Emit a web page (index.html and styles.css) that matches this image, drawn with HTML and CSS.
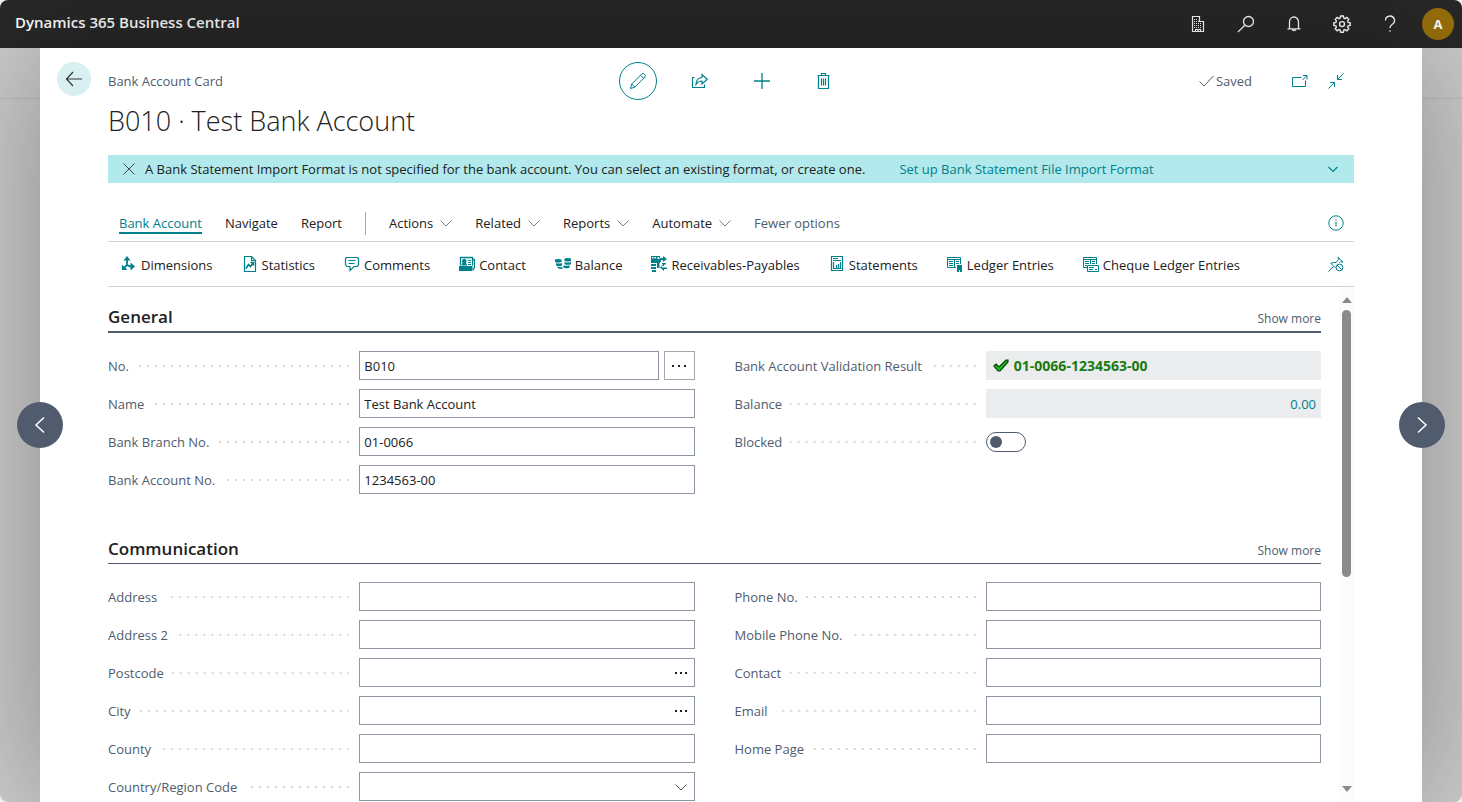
FILE: index.html
```html
<!DOCTYPE html>
<html lang="en">
<head>
<meta charset="utf-8">
<title>Bank Account Card - Dynamics 365 Business Central</title>
<link rel="stylesheet" href="styles.css">
</head>
<body>
<svg class="sprite" aria-hidden="true">
  <symbol id="chevron" viewBox="0 0 12 12"><path d="M.5 3.500 6 9l5.500-5.500" fill="none" stroke="currentColor"/></symbol>
  <symbol id="dots" viewBox="0 0 16 16"><path d="M1 7h2v2H1zM7 7h2v2H7zM13 7h2v2h-2z" fill="currentColor"/></symbol>
</svg>

<div class="app">
  <header class="topbar">
    <div class="brand">Dynamics 365 Business Central</div>
    <nav class="topbar-tools" aria-label="Application">
      <button type="button" class="tool" aria-label="Company">
        <svg width="16" height="16" viewBox="0 0 16 16" fill="none" stroke="currentColor"><path d="M2.500 15.500V.5h7v5h4v10zM5.500 15.500v-2h5v2M8 13.500v2" stroke-width="1.200"/><path d="M4 3.500h1m1 0h1M4 5.500h1m1 0h1m1 0h1M4 7.500h1m1 0h1m1 0h1m1 0h1M4 9.500h1m1 0h1m1 0h1m1 0h1M4 11.500h1m1 0h1m1 0h1m1 0h1"/></svg>
      </button>
      <button type="button" class="tool" aria-label="Search">
        <svg width="18" height="18" viewBox="0 0 18 18" fill="none" stroke="currentColor" stroke-width="1.300"><circle cx="11.500" cy="6.500" r="5"/><path d="M7.800 10.200 1 17"/></svg>
      </button>
      <button type="button" class="tool" aria-label="Notifications">
        <svg width="16" height="16" viewBox="0 0 16 16" fill="none" stroke="currentColor" stroke-width="1.300"><path d="M1.500 12.800h13M3.500 12.500V6a4.500 5 0 0 1 9 0v6.500M6.300 13a1.700 1.700 0 0 0 3.400 0"/></svg>
      </button>
      <button type="button" class="tool" aria-label="Settings">
        <svg width="18" height="18" viewBox="0 0 18 18" fill="none" stroke="currentColor" stroke-width="1.400"><path d="M7.600 1h2.800l.4 2.100 1.200.5 1.800-1.200 2 2-1.200 1.800.5 1.200 2.100.4v2.600l-2.100.4-.5 1.200 1.200 1.800-2 2-1.800-1.200-1.200.5-.4 2.100H7.600l-.4-2.100-1.200-.5-1.800 1.200-2-2L3.400 12l-.5-1.200L.8 10.400V7.800l2.100-.4.5-1.200-1.200-1.800 2-2L6 3.600l1.200-.5z"/><circle cx="9" cy="9.100" r="2.500"/></svg>
      </button>
      <button type="button" class="tool" aria-label="Help">
        <svg width="16" height="18" viewBox="0 0 16 18" fill="none" stroke="currentColor" stroke-width="1.300"><path d="M3.500 5.500a4.500 4.500 0 1 1 6.600 4Q8 10.600 8 13M8 15.300v1.500"/></svg>
      </button>
      <button type="button" class="tool" aria-label="Account"><span class="avatar">A</span></button>
    </nav>
  </header>

  <div class="stage">
    <button type="button" class="pager pager-prev" aria-label="Previous record">
      <svg width="18" height="18" viewBox="0 0 18 18" fill="none" stroke="currentColor" stroke-width="1.500"><path d="M13 1.500 5 9l8 7.500"/></svg>
    </button>
    <button type="button" class="pager pager-next" aria-label="Next record">
      <svg width="18" height="18" viewBox="0 0 18 18" fill="none" stroke="currentColor" stroke-width="1.500"><path d="M5 1.500 13 9l-8 7.500"/></svg>
    </button>

    <main class="card">
      <button type="button" class="back" aria-label="Back">
        <svg width="18" height="16" viewBox="0 0 18 16" fill="none" stroke="currentColor" stroke-width="1.200"><path d="M17 8H1.500M8 1 1.500 8 8 15"/></svg>
      </button>

      <div class="page">
        <div class="page-head">
          <div class="page-type">Bank Account Card</div>
          <div class="page-actions">
            <button type="button" class="round active" aria-label="Edit">
              <svg width="18" height="18" viewBox="0 0 18 18" fill="none" stroke="currentColor"><path d="M1.500 16.500 2.700 12 13 1.700q1.200-.9 2.500.6 1.400 1.300.5 2.500L5.800 15.200zM2.700 12l3.100 3.200M11.500 3.200l3.200 3.200"/></svg>
            </button>
            <button type="button" class="round" aria-label="Share">
              <svg width="18" height="16" viewBox="0 0 18 16" fill="none" stroke="currentColor" stroke-width="1.200"><path d="M3.500 4.500h-2v10h12v-3M5 11.500C5.300 7 7.500 4.500 11 4.500V1.500L16.300 6.200 11 11V8C8 8 6.500 9.200 5 11.500z"/></svg>
            </button>
            <button type="button" class="round" aria-label="New">
              <svg width="16" height="16" viewBox="0 0 16 16" fill="none" stroke="currentColor" stroke-width="1.300"><path d="M0 8h16M8 0v16"/></svg>
            </button>
            <button type="button" class="round" aria-label="Delete">
              <svg width="14" height="16" viewBox="0 0 14 16" fill="none" stroke="currentColor"><path d="M.5 2.500h12M4.500 2.500v-2h4v2M1.500 3v12.500h10V3M4.500 5.500v7M6.500 5.500v7M8.500 5.500v7" stroke-width="1.200"/></svg>
            </button>
          </div>
          <div class="page-status">
            <span class="saved"><svg width="15" height="12" viewBox="0 0 15 12" fill="none" stroke="currentColor"><path d="m.5 6.500 4.500 4.500L14.500.8"/></svg>Saved</span>
            <button type="button" class="plain" aria-label="Open in new window">
              <svg width="16" height="14" viewBox="0 0 16 14" fill="none" stroke="currentColor"><path d="M9.500 3.500h-9v9h13v-6M10.500 6l4-4M11 1.500h4v4"/></svg>
            </button>
            <button type="button" class="plain" aria-label="Collapse">
              <svg width="16" height="16" viewBox="0 0 16 16" fill="none" stroke="currentColor"><path d="M15.500.5l-6 6M9.500 2v4.500H14M.5 15.500l6-6M2 9.500h4.500V14"/></svg>
            </button>
          </div>
        </div>

        <h1 class="title">B010 · Test Bank Account</h1>

        <div class="notice">
          <button type="button" class="plain notice-close" aria-label="Dismiss">
            <svg width="12" height="12" viewBox="0 0 12 12" fill="none" stroke="currentColor"><path d="m.5.5 11 11M11.500.5l-11 11"/></svg>
          </button>
          <span>A Bank Statement Import Format is not specified for the bank account. You can select an existing format, or create one.</span>
          <a href="#setup">Set up Bank Statement File Import Format</a>
          <button type="button" class="plain notice-more" aria-label="More notifications"><svg width="12" height="12" viewBox="0 0 12 12" fill="none" stroke="currentColor" stroke-width="1.200"><path d="M1.500 4 6 8.500 10.500 4"/></svg></button>
        </div>

        <div class="tabs">
          <button type="button" class="tab current">Bank Account</button>
          <button type="button" class="tab">Navigate</button>
          <button type="button" class="tab">Report</button>
          <span class="divider"></span>
          <button type="button" class="tab">Actions<svg width="12" height="12"><use href="#chevron"/></svg></button>
          <button type="button" class="tab">Related<svg width="12" height="12"><use href="#chevron"/></svg></button>
          <button type="button" class="tab">Reports<svg width="12" height="12"><use href="#chevron"/></svg></button>
          <button type="button" class="tab">Automate<svg width="12" height="12"><use href="#chevron"/></svg></button>
          <button type="button" class="tab muted">Fewer options</button>
          <button type="button" class="plain bar-end" aria-label="Details">
            <svg width="16" height="16" viewBox="0 0 16 16" fill="none" stroke="currentColor"><circle cx="8" cy="8" r="7.200"/><path d="M8 6.500v5M8 4v1.200"/></svg>
          </button>
        </div>

        <div class="actions">
          <button type="button" class="action">
            <svg width="16" height="16" viewBox="0 0 16 16" fill="none" stroke="currentColor" stroke-width="1.800"><path d="M6 3v6L3 12M6 9q2 1.500 5 1.500"/><path d="M6 0 9.500 4.500h-7zM1 8.500V14h5.500zM9.500 6.500 14 10.500l-4.500 4z" fill="currentColor" stroke="none"/></svg>Dimensions</button>
          <button type="button" class="action">
            <svg width="16" height="16" viewBox="0 0 16 16" fill="none" stroke="currentColor"><path d="M2.500.5h7l4 4v11h-11zM9.500.5v4h4" stroke-width="1.200"/><path d="m4 12.500 2.500-4 2 2 3-4M8.500 6.500h3v3" stroke-width="1.600"/></svg>Statistics</button>
          <button type="button" class="action">
            <svg width="16" height="16" viewBox="0 0 16 16" fill="none" stroke="currentColor"><path d="M2.500 1.500h11l1 1v6l-1 2H10l-4 4v-4H3l-1.500-2v-6zM4.500 4.500h7M4.500 7.500h6" stroke-width="1.200"/></svg>Comments</button>
          <button type="button" class="action">
            <svg width="16" height="16" viewBox="0 0 16 16" fill="none" stroke="currentColor"><path d="M1.500 9.500v-8h12v8M14 3.500h1.500v8L14 14" stroke-width="1.300"/><path d="M0 10h13.500v5H0zM2.500 9.500q0-2.500 1.300-2.500a2.300 2.300 0 1 1 2.900 0Q8 7 8 9.500z" fill="currentColor" stroke="none"/><path d="M9 4.500h3M9 6.500h3M9 8.500h3"/></svg>Contact</button>
          <button type="button" class="action">
            <svg width="16" height="16" viewBox="0 0 16 16" fill="currentColor"><path d="M0 3.500q3-1.200 6.500 0V6Q3 7 0 6zM1 7q3 1 6 0v2.500q-3 1-6 0zM9.500 2.500q3-1 6.500 0V5q-3 1-6.500 0zM9.500 6q3 1 6.500 0v2.300q-3 1-6.500 0zM8.500 9.300q3 1 6 0v2.400q-3 1-6 0zM2.500 10.500q2 .8 5 .7V13q-4 0-5-1z"/></svg>Balance</button>
          <button type="button" class="action">
            <svg width="16" height="16" viewBox="0 0 16 16" fill="currentColor"><path d="M0 0h9v2.500H8V1H6.500v2H9v4H0zM1 1v1.500h1.500V1zm2.500 0v1.500H5V1zM9.500 2H12V0l4 3-4 3V4h-2v2H9V3zM0 8h5v2H0zM0 11h5v2H0zM1 14h4v2H1zM6 7h2.500v5H6zM16 13h-3v2L9 11.500 13 8v2h-2v1.500h5zM11 7h4v1.500h-4z"/></svg>Receivables-Payables</button>
          <button type="button" class="action">
            <svg width="16" height="16" viewBox="0 0 16 16" fill="none" stroke="currentColor"><path d="M2.500.5h11v14h-11zM4 2.500h5M4 4.500h8M4.500 6v6.500h8M7.500 12V9M9.500 12V8M11.500 12V6" stroke-width="1.200"/></svg>Statements</button>
          <button type="button" class="action">
            <svg width="16" height="16" viewBox="0 0 16 16" fill="none" stroke="currentColor"><path d="M9 11.500H.5V1.500h13V8M.5 3.500h13M7.500 3.500v8M2 5.500h4M2 7.500h4M2 9.500h4M9 5.500h3M9 7.500h3"/><path d="M10 9h5v7h-2v-2h-1v2h-2z" fill="currentColor" stroke="none"/></svg>Ledger Entries</button>
          <button type="button" class="action">
            <svg width="16" height="16" viewBox="0 0 16 16" fill="none" stroke="currentColor"><path d="M4 11.500H.5v-10h13V8M.5 3.500h13M7.500 3.500V8M2 5.500h4M2 7.500h4M2 9.500h2M9 5.500h3M9 7.500h3M4.500 9.500h11v6h-11zM6 11.500h5M12 13.500h2M6 13.500h4"/></svg>Cheque Ledger Entries</button>
          <button type="button" class="plain bar-end" aria-label="Unpin">
            <svg width="16" height="16" viewBox="0 0 16 16" fill="none" stroke="currentColor"><path d="M.5 15.500 5.500 10.500M2.500 7l5 5M3 7.300q2.500-1.300 5-.8l2.700-3L10 1.200 15 6l-2.500-.3-1 1"/><circle cx="11.500" cy="11.500" r="3.400"/><path d="m9.200 9.200 4.600 4.600"/></svg>
          </button>
        </div>

        <div class="scroller">
          <form class="form">
            <section class="group">
              <div class="group-head strong"><h2>General</h2><button type="button" class="more">Show more</button></div>
              <div class="fields">
                <div class="column">
                  <div class="field"><label for="no">No.</label><div class="control split"><input id="no" type="text" value="B010"><button type="button" class="assist-box" aria-label="Choose number series"><svg width="16" height="16"><use href="#dots"/></svg></button></div></div>
                  <div class="field"><label for="name">Name</label><div class="control"><input id="name" type="text" value="Test Bank Account"></div></div>
                  <div class="field"><label for="branch">Bank Branch No.</label><div class="control"><input id="branch" type="text" value="01-0066"></div></div>
                  <div class="field"><label for="account">Bank Account No.</label><div class="control"><input id="account" type="text" value="1234563-00"></div></div>
                </div>
                <div class="column">
                  <div class="field"><label for="result">Bank Account Validation Result</label><output id="result" class="control readonly valid"><svg width="16" height="14" viewBox="0 0 16 14"><path d="m1 7 2-2 3 3 7-7h2v2L7 12H5z" fill="#13c013" stroke="#0b3d0b" stroke-width="1.200"/></svg>01-0066-1234563-00</output></div>
                  <div class="field"><label for="balance">Balance</label><output id="balance" class="control readonly amount"><a href="#balance">0.00</a></output></div>
                  <div class="field"><label for="blocked">Blocked</label><div class="control"><input id="blocked" type="checkbox" class="switch"></div></div>
                </div>
              </div>
            </section>

            <section class="group">
              <div class="group-head"><h2>Communication</h2><button type="button" class="more">Show more</button></div>
              <div class="fields">
                <div class="column">
                  <div class="field"><label for="address">Address</label><div class="control"><input id="address" type="text"></div></div>
                  <div class="field"><label for="address2">Address 2</label><div class="control"><input id="address2" type="text"></div></div>
                  <div class="field"><label for="postcode">Postcode</label><div class="control"><input id="postcode" type="text"><button type="button" class="assist" aria-label="Look up postcode"><svg width="12" height="12" viewBox="0 0 12 12" fill="currentColor"><path d="M0 5h2v2H0zM5 5h2v2H5zM10 5h2v2h-2z"/></svg></button></div></div>
                  <div class="field"><label for="city">City</label><div class="control"><input id="city" type="text"><button type="button" class="assist" aria-label="Look up city"><svg width="12" height="12" viewBox="0 0 12 12" fill="currentColor"><path d="M0 5h2v2H0zM5 5h2v2H5zM10 5h2v2h-2z"/></svg></button></div></div>
                  <div class="field"><label for="county">County</label><div class="control"><input id="county" type="text"></div></div>
                  <div class="field"><label for="country">Country/Region Code</label><div class="control"><select id="country"><option></option></select><span class="assist passive"><svg width="12" height="12"><use href="#chevron"/></svg></span></div></div>
                </div>
                <div class="column">
                  <div class="field"><label for="phone">Phone No.</label><div class="control"><input id="phone" type="tel"></div></div>
                  <div class="field"><label for="mobile">Mobile Phone No.</label><div class="control"><input id="mobile" type="tel"></div></div>
                  <div class="field"><label for="contact">Contact</label><div class="control"><input id="contact" type="text"></div></div>
                  <div class="field"><label for="email">Email</label><div class="control"><input id="email" type="email"></div></div>
                  <div class="field"><label for="home">Home Page</label><div class="control"><input id="home" type="url"></div></div>
                </div>
              </div>
            </section>
          </form>
          <div class="scrollbar" aria-hidden="true">
            <svg width="10" height="6" viewBox="0 0 10 6"><path d="M0 6 5 0l5 6z" fill="currentColor"/></svg>
            <div class="track"><div class="thumb"></div></div>
            <svg width="10" height="6" viewBox="0 0 10 6"><path d="m0 0 5 6 5-6z" fill="currentColor"/></svg>
          </div>
        </div>
      </div>
    </main>
  </div>
</div>
</body>
</html>
```

FILE: styles.css
```css
:root {
  --teal: #00808a;
  --slate: #505c6d;
  --ink: #212121;
  --line: #d0d3d6;
}

* { box-sizing: border-box; }

html { background: #f1f1f1; }

body {
  margin: 0;
  font: 13px/20px "Open Sans", "Noto Sans", sans-serif;
  color: var(--ink);
}

button, input, select { font: inherit; color: inherit; }

button {
  display: inline-flex;
  align-items: center;
  padding: 0;
  border: 0;
  background: none;
  cursor: pointer;
  white-space: nowrap;
}

a { color: var(--teal); text-decoration: none; }
svg { display: block; flex: none; }
.sprite { position: absolute; width: 0; height: 0; }

.app {
  display: flex;
  flex-direction: column;
  height: 100vh;
  border-radius: 8px;
  overflow: hidden;
}

/* Top bar */
.topbar {
  display: flex;
  align-items: center;
  justify-content: space-between;
  flex: none;
  height: 48px;
  padding-left: 15px;
  background: #282828;
  color: #fff;
}
.brand { padding-bottom: 4px; font-size: 15px; font-weight: 600; }
.topbar-tools { display: flex; }
.tool { justify-content: center; width: 48px; height: 48px; }
.avatar {
  width: 32px;
  border-radius: 50%;
  background: #986f0b;
  font-weight: 700;
  line-height: 32px;
}

/* Record card over the dimmed list */
.stage {
  position: relative;
  display: flex;
  flex: 1;
  min-height: 0;
  padding: 0 40px;
  background: linear-gradient(#bcbcbc 0 0) 0 50px / 100% 1px no-repeat, #cbcbcb;
}
.card {
  display: grid;
  grid-template-columns: 68px minmax(0, 1fr) 68px;
  flex: 1;
  min-width: 0;
  padding-top: 14px;
  background: #fff;
  box-shadow: 0 0 120px rgba(0, 0, 0, .32);
}
.page { display: flex; flex-direction: column; min-height: 0; }

.pager {
  position: absolute;
  top: 50%;
  justify-content: center;
  width: 46px;
  height: 46px;
  border-radius: 50%;
  background: var(--slate);
  color: #fff;
  transform: translateY(-50%);
}
.pager-prev { left: 17px; }
.pager-next { right: 17px; }

.back {
  justify-self: center;
  align-self: start;
  justify-content: center;
  width: 34px;
  height: 34px;
  border-radius: 50%;
  background: #d9f0f2;
  color: #333;
}

.page-head {
  display: grid;
  grid-template-columns: 1fr auto 1fr;
  align-items: center;
}
.page-type, .page-status { color: var(--slate); }
.page-actions { display: flex; gap: 24px; color: var(--teal); }
.round {
  justify-content: center;
  width: 38px;
  height: 38px;
  border-radius: 50%;
  color: var(--teal);
}
.round.active { border: 1px solid var(--teal); }
.page-status { display: flex; align-items: center; justify-content: flex-end; gap: 20px; padding-right: 10px; }
.saved { display: flex; align-items: center; gap: 2px; margin-right: 20px; }
.plain { color: var(--teal); }

.title {
  margin: 0 0 13px;
  font-size: 27px;
  font-weight: 300;
  line-height: 42px;
}

.notice {
  display: flex;
  align-items: center;
  gap: 10px;
  min-height: 28px;
  padding: 0 15px;
  background: #b2e9ec;
}
.notice-close { color: #444; }
.notice a { margin-left: 24px; }
.notice-more { margin-left: auto; }

.tabs, .actions {
  display: flex;
  align-items: center;
  border-bottom: 1px solid var(--line);
}
.tabs { gap: 23px; height: 37px; margin-top: 22px; padding: 0 10px 0 11px; }
.tab { gap: 7px; height: 22px; padding-top: 2px; border-bottom: 2px solid transparent; }
.tab svg { color: #808080; }
.tab.current { border-color: var(--teal); color: var(--teal); }
.tab.muted { color: var(--slate); }
.divider { width: 1px; height: 23px; background: #a0a6ad; }
.actions { gap: 29px; height: 45px; padding: 0 10px 0 13px; }
.action { gap: 4px; padding-top: 2px; }
.action svg { margin-bottom: 2px; color: var(--teal); }
.bar-end { margin-left: auto; }

/* Scrolling form */
.scroller { display: flex; flex: 1; gap: 18px; min-height: 0; }
.form { flex: 1; min-width: 0; overflow: hidden; }
.scrollbar {
  display: flex;
  flex-direction: column;
  align-items: center;
  gap: 7px;
  width: 15px;
  padding: 10px 0;
  background: #fcfcfc;
  color: #8a8a8a;
}
.track { flex: 1; width: 9px; }
.thumb { height: 57%; border-radius: 5px; background: #8a8a8a; }

.group { padding-bottom: 39px; }
.group-head {
  display: flex;
  align-items: flex-end;
  justify-content: space-between;
  height: 46px;
  padding-bottom: 2px;
  border-bottom: 2px solid var(--slate);
}
.group + .group .group-head { height: 31px; border-bottom-width: 1px; }
.group-head h2 { margin: 0; font-size: 17px; font-weight: 600; line-height: 24px; }
.more { color: var(--slate); font-size: 12px; }

.fields {
  display: grid;
  grid-template-columns: 1fr 1fr;
  gap: 40px;
  padding-top: 18px;
}
.column { display: flex; flex-direction: column; gap: 9px; }
.field {
  display: grid;
  grid-template-columns: 3fr 4fr;
  align-items: center;
  min-height: 29px;
}
.field label {
  display: flex;
  align-items: center;
  gap: 8px;
  padding-right: 10px;
  color: var(--slate);
  white-space: nowrap;
}
.field label::after {
  content: "";
  flex: 1;
  height: 2px;
  background: linear-gradient(90deg, transparent 6px, #d8d8d8 6px) right / 8px 2px;
}
.control { position: relative; display: flex; min-width: 0; }
.control input:not(.switch), .control select {
  appearance: none;
  flex: 1;
  min-width: 0;
  height: 29px;
  padding: 0 4px;
  border: 1px solid #8c95a2;
  border-radius: 0;
  background: #fff;
}
.split { gap: 5px; }
.assist-box {
  justify-content: center;
  width: 31px;
  border: 1px solid #a6a6a6;
}
.assist {
  position: absolute;
  top: 0;
  right: 0;
  justify-content: center;
  width: 28px;
  height: 29px;
}
.passive { display: flex; align-items: center; color: #555; pointer-events: none; }

.readonly {
  align-items: center;
  height: 29px;
  padding: 0 5px 0 7px;
  background: #ebecee;
}
.valid { gap: 5px; color: #1b7a12; font-size: 14px; font-weight: 700; }
.amount { justify-content: flex-end; }

.switch {
  appearance: none;
  display: flex;
  align-items: center;
  width: 40px;
  height: 20px;
  margin: 0;
  padding: 0 3px;
  border: 1px solid var(--slate);
  border-radius: 10px;
  background: #fff;
}
.switch::before {
  content: "";
  width: 12px;
  height: 12px;
  border-radius: 50%;
  background: var(--slate);
}
.switch:checked { justify-content: flex-end; }
```
